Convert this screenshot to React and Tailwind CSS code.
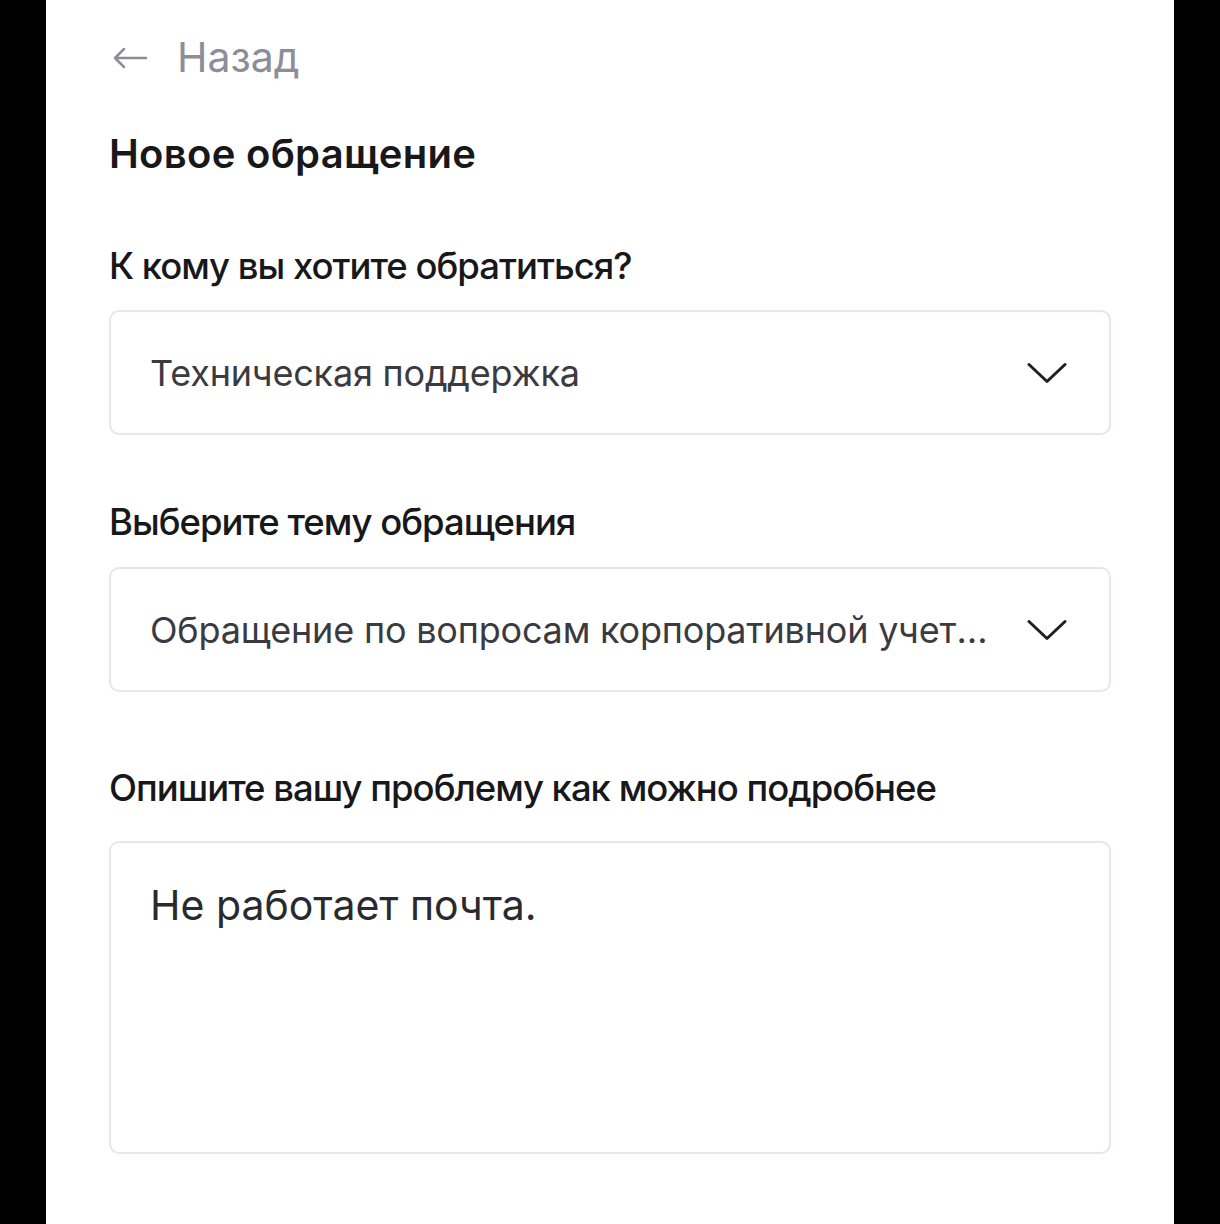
import React from 'react';

const font = { fontFamily: 'Inter, "Noto Sans", sans-serif' };

const Chevron = () => (
    <svg width="40" height="22" viewBox="0 0 40 22" fill="none" className="shrink-0">
        <path d="M2 2.5 L20 19.5 L38 2.5" stroke="#1f1f24" strokeWidth="3" strokeLinecap="round" strokeLinejoin="round" />
    </svg>
);

const Select = ({ value }) => (
    <div className="flex h-[125px] items-center justify-between rounded-[10px] border-2 border-[#e6e6f0] bg-white pl-[39px] pr-[42px]">
        <span className="truncate text-[36px] tracking-[-0.2px] text-[#3a3a40]">{value}</span>
        <div className="ml-[36px]">
            <Chevron />
        </div>
    </div>
);

export default function App() {
    return (
        <div className="flex min-h-[1224px] bg-black" style={font}>
            <div className="mx-[46px] flex w-[1128px] flex-col bg-white pl-[63px] pr-[63px]">
                {/* Back link */}
                <div className="mt-[34px] flex h-[48px] items-center text-[#8d8d99]">
                    <svg width="36" height="22" viewBox="0 0 36 22" fill="none" className="ml-[3px]">
                        <path d="M34 11 H3 M12 2 L3 11 L12 20" stroke="#8d8d99" strokeWidth="2.5" strokeLinecap="round" strokeLinejoin="round" />
                    </svg>
                    <span className="ml-[29px] text-[41px]">Назад</span>
                </div>

                <h1 className="mt-[48px] text-[40px] font-semibold leading-[48px] tracking-[0.3px] text-[#18181b]">
                    Новое обращение
                </h1>

                <p className="mt-[66px] text-[36.5px] font-medium leading-[44px] tracking-[-1px] text-[#18181b]">
                    К кому вы хотите обратиться?
                </p>
                <div className="mt-[22px]">
                    <Select value="Техническая поддержка" />
                </div>

                <p className="mt-[65px] text-[36.5px] font-medium leading-[44px] tracking-[-1px] text-[#18181b]">
                    Выберите тему обращения
                </p>
                <div className="mt-[23px]">
                    <Select value="Обращение по вопросам корпоративной учетной записи" />
                </div>

                <p className="mt-[74px] text-[36.5px] font-medium leading-[44px] tracking-[-1px] text-[#18181b]">
                    Опишите вашу проблему как можно подробнее
                </p>
                <div className="mt-[31px] h-[313px] rounded-[10px] border-2 border-[#e6e6f0] bg-white px-[39px] pt-[37px]">
                    <p className="text-[41px] leading-[50px] text-[#2a2a2e]">Не работает почта.</p>
                </div>
            </div>
        </div>
    );
}
